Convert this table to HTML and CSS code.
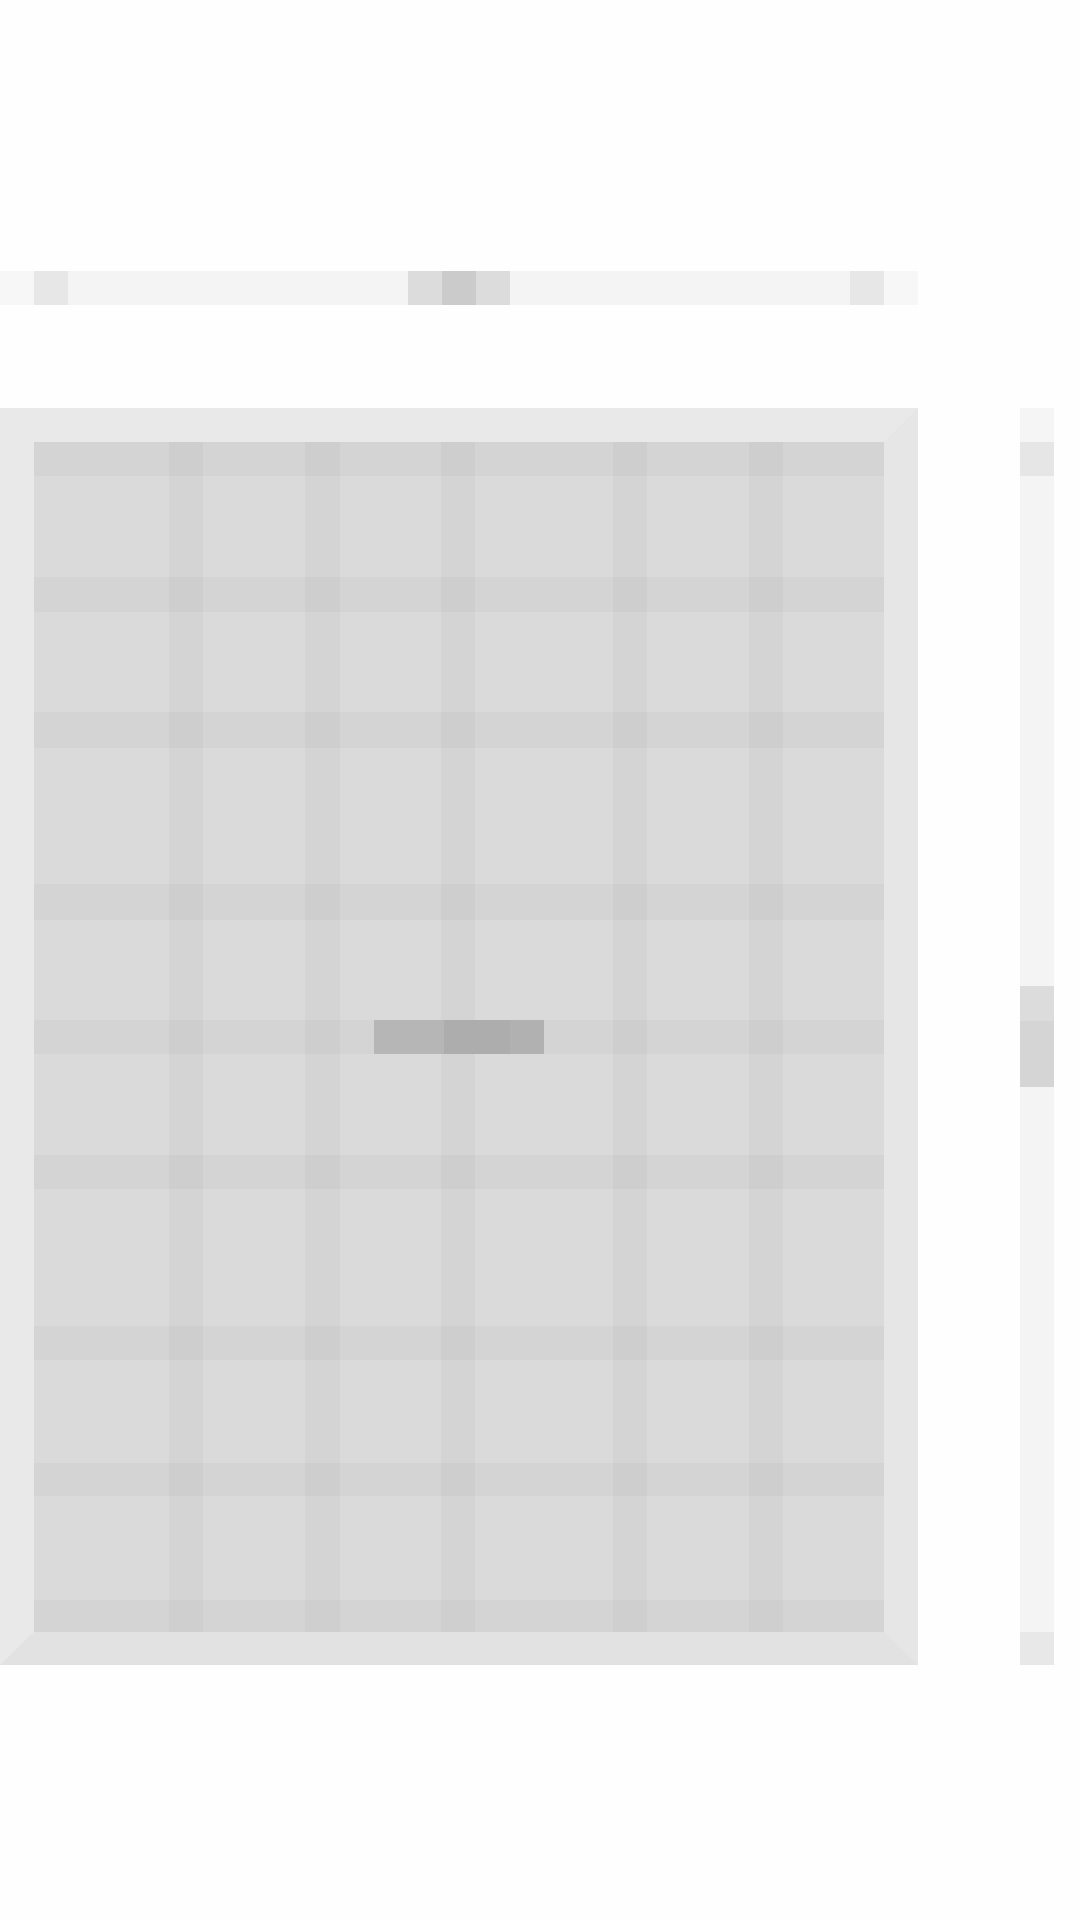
FILE: index.html
```html
<!DOCTYPE html>
<html lang="en">
<head>
<meta charset="utf-8">
<title>Grid</title>
<link rel="stylesheet" href="styles.css">
</head>
<body>
<div class="page">
  <div class="slider">
    <div class="s-end"></div>
    <div class="s-cap"></div>
    <div class="s-track"></div>
    <div class="s-knob-side"></div>
    <div class="s-knob"></div>
    <div class="s-knob-side"></div>
    <div class="s-track"></div>
    <div class="s-cap"></div>
    <div class="s-end"></div>
  </div>
  <div class="main">
    <div class="table">
      <div class="grid">
        <div class="vline c2"></div>
        <div class="vline c4"></div>
        <div class="vline c6"></div>
        <div class="vline c8"></div>
        <div class="vline c10"></div>
        <div class="hband r1"></div>
        <div class="hband r3"></div>
        <div class="hband r5"></div>
        <div class="hband r7"></div>
        <div class="hband r9"></div>
        <div class="hband r11"></div>
        <div class="hband r13"></div>
        <div class="hband r15"></div>
        <div class="hband r17"></div>
        <div class="loader"></div>
      </div>
    </div>
    <div class="scrollbar">
      <div class="sb-top"></div>
      <div class="sb-arrow"></div>
      <div class="sb-track sb-track-a"></div>
      <div class="sb-thumb"></div>
      <div class="sb-track sb-track-b"></div>
      <div class="sb-arrow sb-arrow-b"></div>
    </div>
  </div>
</div>
</body>
</html>
```

FILE: styles.css
```css
html, body {
  margin: 0;
  padding: 0;
  background: #fefefe;
  font-family: "Liberation Sans", Arial, sans-serif;
}

.page {
  width: 1080px;
  height: 1920px;
  padding-top: 271px;
  box-sizing: border-box;
}

/* top slider */
.slider {
  display: flex;
  width: 918px;
  height: 34px;
}
.s-end { width: 34px; background: #f7f7f7; }
.s-cap { width: 34px; background: #e7e7e7; }
.s-track { width: 340px; background: #f4f4f4; }
.s-knob-side { width: 34px; background: #dcdcdc; }
.s-knob { width: 34px; background: #cbcbcb; }

/* main area */
.main {
  display: flex;
  gap: 102px;
  margin-top: 103px;
}

.table {
  width: 918px;
  height: 1257px;
  box-sizing: border-box;
  border-style: solid;
  border-width: 34px 34px 33px 34px;
  border-color: #e9e9e9 #e6e6e6 #e2e2e2 #e9e9e9;
}

.grid {
  display: grid;
  width: 850px;
  height: 1190px;
  background: #dadada;
  grid-template-columns: 135px 34px 102px 35px 101px 34px 138px 34px 102px 34px 101px;
  grid-template-rows: 34px 101px 35px 100px 36px 136px 36px 100px 34px 101px 34px 137px 34px 103px 33px 104px 32px;
}

.vline {
  grid-row: 1 / -1;
  background: #d4d4d4;
}
.c2 { grid-column: 2; }
.c4 { grid-column: 4; }
.c6 { grid-column: 6; }
.c8 { grid-column: 8; }
.c10 { grid-column: 10; }

.hband {
  grid-column: 1 / -1;
  background: rgba(0, 0, 0, 0.027);
}
.r1 { grid-row: 1; }
.r3 { grid-row: 3; }
.r5 { grid-row: 5; }
.r7 { grid-row: 7; }
.r9 { grid-row: 9; }
.r11 { grid-row: 11; }
.r13 { grid-row: 13; }
.r15 { grid-row: 15; }
.r17 { grid-row: 17; background: rgba(0, 0, 0, 0.022); }

.loader {
  grid-row: 9;
  grid-column: 5 / 8;
  margin-left: 34px;
  width: 170px;
  z-index: 1;
  background: linear-gradient(90deg, #b6b6b6 0 41%, #adadad 41% 80%, #b1b1b1 80% 100%);
}

/* right scrollbar */
.scrollbar {
  display: flex;
  flex-direction: column;
  width: 34px;
  height: 1257px;
}
.sb-top { height: 34px; background: #f5f5f5; }
.sb-arrow { height: 34px; background: #e6e6e6; }
.sb-arrow-b { height: 33px; background: #e8e8e8; }
.sb-track { background: #f4f4f4; }
.sb-track-a { height: 510px; }
.sb-track-b { height: 545px; }
.sb-thumb {
  height: 101px;
  background: linear-gradient(180deg, #dcdcdc 0 35%, #d5d5d5 35% 100%);
}
```
